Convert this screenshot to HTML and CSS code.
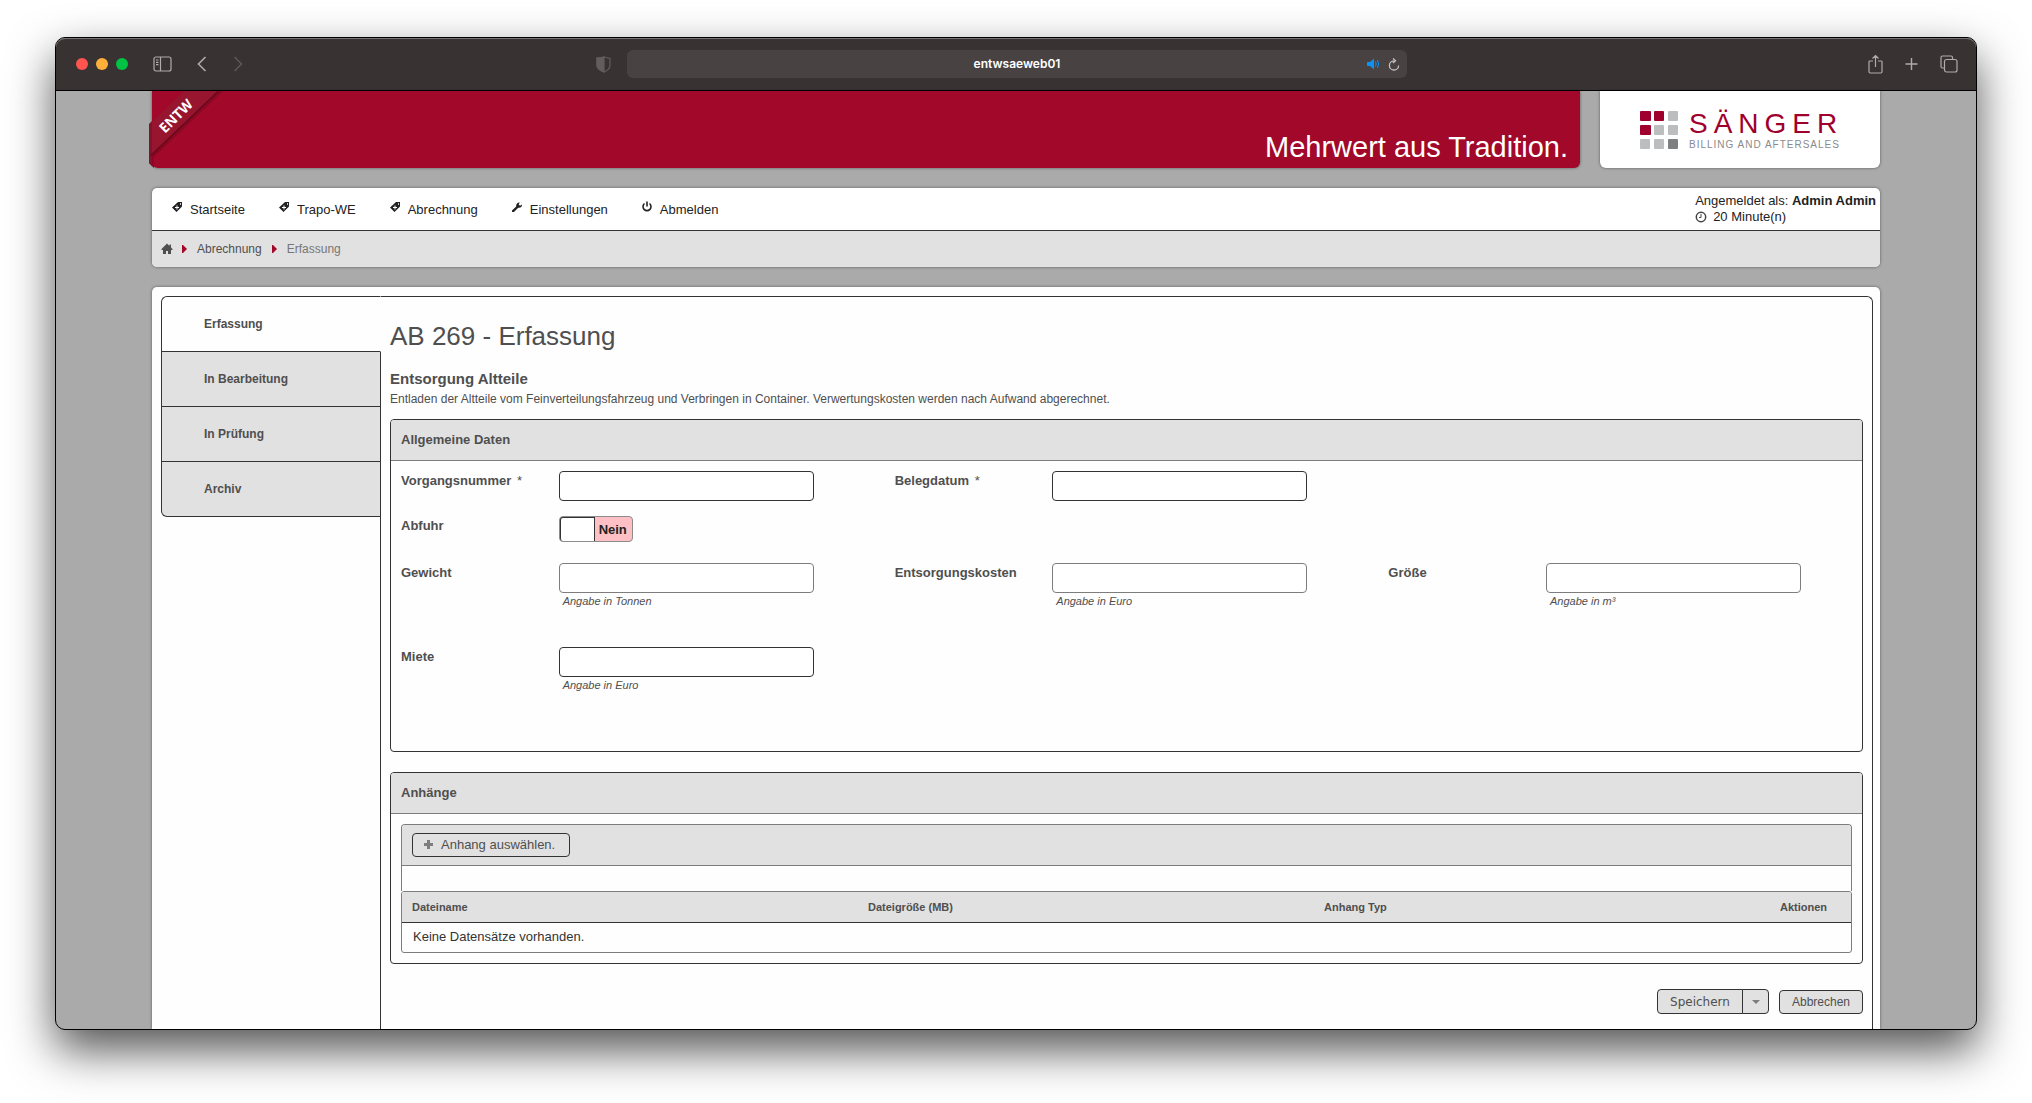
FILE: index.html
```html
<!DOCTYPE html>
<html lang="de">
<head>
<meta charset="utf-8">
<title>AB 269 - Erfassung</title>
<link rel="stylesheet" href="styles.css">
</head>
<body>
<svg class="sprite" aria-hidden="true">
  <symbol id="tag" viewBox="0 0 16 16"><path fill-rule="evenodd" d="M9 3h4v4.500L7.500 13 3 8.500zM11 4.300v1.400h1V4.300zM7.500 6.500v1.500H6v1h1.500v1.500h1V9H10V8H8.500V6.500z"/></symbol>
  <symbol id="wrench" viewBox="0 0 16 16"><path d="M3 11.500 7.200 7.400C6.800 5.300 8.300 3.300 10.700 3.500L9.700 5.500l1.300 1.200 2-1.200c.2 2.400-1.800 3.800-3.800 3.200L5 13H3z"/></symbol>
  <symbol id="power" viewBox="0 0 16 16"><path d="M5.500 4.500a4 4 0 1 0 5 0M8 2.500v5" fill="none" stroke="currentColor" stroke-width="1.600"/></symbol>
  <symbol id="home" viewBox="0 0 16 16"><path d="M8 2.500 10.500 5V3.500H12v3l1.500 1.500v1H12v4H9v-3H7v3H4V9H2.500V8z"/></symbol>
  <symbol id="arrow" viewBox="0 0 5 8"><path d="M0 0h1l4 4-4 4H0z"/></symbol>
</svg>

<div class="window">
  <header class="toolbar">
    <div class="toolbar-left">
      <div class="lights"><span class="light red"></span><span class="light yellow"></span><span class="light green"></span></div>
      <button class="tool" type="button" aria-label="Seitenleiste"><svg width="20" height="16" viewBox="0 0 20 16" fill="none" stroke="currentColor" stroke-width="1.200"><rect x="1" y="1" width="17" height="14" rx="2"/><path d="M7.500 1v14M3 4h2.500M3 6.300h2.500M3 8.600h2.500"/></svg></button>
      <button class="tool back" type="button" aria-label="Zurück"><svg width="10" height="16" viewBox="0 0 10 16" fill="none" stroke="currentColor" stroke-width="1.600"><path d="M8.500 1 1.500 8l7 7"/></svg></button>
      <button class="tool dim" type="button" aria-label="Vorwärts"><svg width="10" height="16" viewBox="0 0 10 16" fill="none" stroke="currentColor" stroke-width="1.600"><path d="m1.500 1 7 7-7 7"/></svg></button>
    </div>
    <div class="toolbar-center">
      <button class="tool shield" type="button" aria-label="Datenschutz"><svg width="16" height="17" viewBox="0 0 16 17" fill="none" stroke="currentColor" stroke-width="1.200"><path d="M8 1C6 1.500 3 2 1 2v7.500c0 3 3.500 5 7 6.500 3.500-1.500 6-3.500 6-6.500V2.500C12 2 10 1.500 8 1z"/><path d="M8 1C6 1.500 3 2 1 2v7.500c0 3 3.500 5 7 6.500z" fill="currentColor"/></svg></button>
      <div class="address">
        <span class="host">entwsaeweb01</span>
        <svg class="sound" width="13" height="12" viewBox="0 0 13 12"><path d="M0 4h3l4-3.500v11L3 8H0z" fill="currentColor"/><path d="M8.500 3.500q1.300 2.500 0 5M10.500 2q2.200 4 0 8" fill="none" stroke="currentColor"/></svg>
        <button class="tool reload" type="button" aria-label="Neu laden"><svg width="12" height="13" viewBox="0 0 12 13" fill="none" stroke="currentColor" stroke-width="1.300"><path d="M6 2.800A4.600 4.600 0 1 0 10.600 7.400M5 .5l2.500 2.300L5 5"/></svg></button>
      </div>
    </div>
    <div class="toolbar-right">
      <button class="tool" type="button" aria-label="Teilen"><svg width="15" height="20" viewBox="0 0 15 20" fill="none" stroke="currentColor" stroke-width="1.200"><path d="M5 7H1.700q-.7 0-.7.700v10.100q0 1.200 1.200 1.200h10.600q1.200 0 1.200-1.200V7.700q0-.7-.7-.7H10M7.500 13V1.500M4.500 4.500l3-3 3 3"/></svg></button>
      <button class="tool" type="button" aria-label="Neuer Tab"><svg width="13" height="14" viewBox="0 0 13 14" fill="none" stroke="currentColor" stroke-width="1.400"><path d="M6.500 1v12M.5 7h12"/></svg></button>
      <button class="tool" type="button" aria-label="Tabübersicht"><svg width="18" height="18" viewBox="0 0 18 18" fill="none" stroke="currentColor" stroke-width="1.200"><path d="M4 13H2.500Q1 13 1 11.500v-9Q1 1 2.500 1H11q1.500 0 1.500 1.500V4"/><rect x="4.500" y="4.500" width="12.500" height="12.500" rx="2"/></svg></button>
    </div>
  </header>

  <div class="page">
    <div class="masthead">
      <div class="banner">
        <svg class="ribbon" width="78" height="77" viewBox="0 0 78 77">
          <path d="M0 36Q0 33 3 31L35 0h35L0 66z" fill="#97152e"/>
          <path d="M70 0 0 66v6l5 5V66L74 0z" fill="#8a0824"/>
          <path d="M0 33v39l3 3V30z" fill="#7e1528"/>
          <path d="M69.500 0 2 64.500" stroke="#660a1c" stroke-width="1.500"/>
          <text class="ribbon-text" transform="translate(16 43) rotate(-45)">ENTW</text>
        </svg>
        <p class="slogan">Mehrwert aus Tradition.</p>
      </div>
      <div class="brand">
        <svg width="38" height="38" viewBox="0 0 38 38" fill="#bbbdbf"><g fill="#a0002d"><rect width="11" height="10" rx="1"/><rect x="14" width="10" height="10" rx="1"/><rect y="14" width="11" height="10" rx="1"/></g><rect x="28" width="10" height="10" rx="1"/><rect x="14" y="14" width="10" height="10" rx="1"/><rect x="28" y="14" width="10" height="10" rx="1"/><rect y="28" width="10" height="10" rx="1"/><rect x="14" y="28" width="10" height="10" rx="1"/><rect x="28" y="28" width="10" height="10" rx="1" fill="#7d7f81"/></svg>
        <div class="brand-text"><span class="brand-name">SÄNGER</span><span class="brand-sub">BILLING AND AFTERSALES</span></div>
      </div>
    </div>

    <div class="navbox">
      <div class="navrow">
        <nav class="menu" aria-label="Hauptmenü">
          <a href="#"><svg class="icon"><use href="#tag"/></svg>Startseite</a>
          <a href="#"><svg class="icon"><use href="#tag"/></svg>Trapo-WE</a>
          <a href="#"><svg class="icon"><use href="#tag"/></svg>Abrechnung</a>
          <a href="#"><svg class="icon"><use href="#wrench"/></svg>Einstellungen</a>
          <a href="#"><svg class="icon"><use href="#power"/></svg>Abmelden</a>
        </nav>
        <div class="user">
          <span>Angemeldet als: <b>Admin Admin</b></span>
          <span class="timer"><svg width="12" height="12" viewBox="0 0 12 12" fill="none" stroke="#444"><circle cx="6" cy="6" r="4.700" stroke-width="1.500"/><path d="M6 3v3.500H4"/></svg>20 Minute(n)</span>
        </div>
      </div>
      <nav class="crumbs" aria-label="Brotkrumen">
        <a class="home" href="#" aria-label="Start"><svg class="icon"><use href="#home"/></svg></a>
        <svg class="arrow"><use href="#arrow"/></svg>
        <a href="#">Abrechnung</a>
        <svg class="arrow"><use href="#arrow"/></svg>
        <span class="current">Erfassung</span>
      </nav>
    </div>

    <div class="card">
      <nav class="tabs" aria-label="Status">
        <a class="tab active" href="#">Erfassung</a>
        <a class="tab" href="#">In Bearbeitung</a>
        <a class="tab" href="#">In Prüfung</a>
        <a class="tab" href="#">Archiv</a>
      </nav>
      <main class="main">
        <h1>AB 269 - Erfassung</h1>
        <h2>Entsorgung Altteile</h2>
        <p class="intro">Entladen der Altteile vom Feinverteilungsfahrzeug und Verbringen in Container. Verwertungskosten werden nach Aufwand abgerechnet.</p>

        <section class="panel">
          <h3>Allgemeine Daten</h3>
          <form class="fields">
            <div class="field"><label for="vorgang">Vorgangsnummer <span class="req">*</span></label><div><input class="text" id="vorgang" type="text"></div></div>
            <div class="field"><label for="beleg">Belegdatum <span class="req">*</span></label><div><input class="text" id="beleg" type="text"></div></div>
            <div class="field field-switch"><label for="abfuhr">Abfuhr</label><div class="switch"><input id="abfuhr" type="checkbox" role="switch"><span>Nein</span></div></div>
            <div class="field field-hinted first"><label for="gewicht">Gewicht</label><div><input class="text light-line" id="gewicht" type="text"><small>Angabe in Tonnen</small></div></div>
            <div class="field field-hinted"><label for="kosten">Entsorgungskosten</label><div><input class="text light-line" id="kosten" type="text"><small>Angabe in Euro</small></div></div>
            <div class="field field-hinted"><label for="groesse">Größe</label><div><input class="text light-line" id="groesse" type="text"><small>Angabe in m³</small></div></div>
            <div class="field field-hinted first"><label for="miete">Miete</label><div><input class="text" id="miete" type="text"><small>Angabe in Euro</small></div></div>
          </form>
        </section>

        <section class="panel">
          <h3>Anhänge</h3>
          <div class="files">
            <div class="upload">
              <div class="upload-bar"><button class="btn pick" type="button"><svg width="9" height="9" viewBox="0 0 9 9" fill="#7d7d7d"><path d="M3 0h3v3h3v3H6v3H3V6H0V3h3z"/></svg>Anhang auswählen.</button></div>
              <div class="upload-list"></div>
            </div>
            <div class="table-frame">
              <table>
                <thead><tr><th>Dateiname</th><th>Dateigröße (MB)</th><th>Anhang Typ</th><th class="actions-col">Aktionen</th></tr></thead>
                <tbody><tr><td colspan="4">Keine Datensätze vorhanden.</td></tr></tbody>
              </table>
            </div>
          </div>
        </section>

        <div class="buttons">
          <div class="split"><button class="btn save" type="button">Speichern</button><button class="btn more" type="button" aria-label="Weitere Optionen"><svg width="8" height="4" viewBox="0 0 8 4" fill="#7d7d7d"><path d="M0 0h8L4 4z"/></svg></button></div>
          <button class="btn cancel" type="button">Abbrechen</button>
        </div>
      </main>
    </div>
  </div>
</div>
</body>
</html>
```

FILE: styles.css
```css
* { box-sizing: border-box; }

body {
  margin: 0;
  min-height: 100vh;
  padding: 37px 55px 73px;
  display: flex;
  background: #fff;
  color: #4f4f4f;
  font: 13px/16px "Liberation Sans", Arial, sans-serif;
}

a { color: inherit; text-decoration: none; }
h1, h2, h3, p { margin: 0; }
button { font: inherit; color: inherit; cursor: pointer; }
svg { display: block; flex: none; }
.sprite { position: absolute; width: 0; height: 0; }
.icon { width: 16px; height: 16px; fill: currentColor; }

/* Browser window */
.window {
  flex: 1;
  min-width: 0;
  display: flex;
  flex-direction: column;
  overflow: hidden;
  border: 1px solid #000;
  border-radius: 10px;
  background: #aaa;
  box-shadow: 0 20px 46px rgba(0, 0, 0, .68);
}

.toolbar {
  display: grid;
  grid-template-columns: 1fr 842px 1fr;
  align-items: center;
  height: 53px;
  padding: 0 18px 0 20px;
  border-bottom: 1px solid #000;
  box-shadow: inset 0 1px #777273;
  border-radius: 9px 9px 0 0;
  background: #393232;
  color: #b0acac;
}
.toolbar-left, .toolbar-center, .toolbar-right, .lights { display: flex; align-items: center; }
.toolbar-right { justify-content: flex-end; gap: 22px; }
.lights { gap: 8px; margin-right: 25px; }
.light { width: 12px; height: 12px; border-radius: 50%; }
.red { background: #ff5450; }
.yellow { background: #ffb03a; }
.green { background: #00c244; }
.tool { padding: 0; border: 0; background: none; }
.back { margin: 0 26px 0 24px; }
.dim { color: #5c5656; }
.shield { margin-right: 15px; color: #635d5d; }
.address {
  flex: 1;
  display: grid;
  grid-template-columns: 1fr auto 1fr;
  align-items: center;
  height: 28px;
  margin-right: 31px;
  padding: 0 7px;
  border-radius: 6px;
  background: #484242;
}
.host { grid-column: 2; color: #fff; font: 600 12px/16px Inter, sans-serif; }
.sound { grid-row: 1; grid-column: 3; justify-self: end; margin-right: 20px; color: #0a93f5; }
.reload { grid-row: 1; grid-column: 3; justify-self: end; color: #c5c2c2; }

/* Site header */
.page { flex: 1; display: flex; flex-direction: column; gap: 20px; padding: 0 96px; }
.masthead { display: grid; grid-template-columns: 1fr 280px; gap: 20px; }
.banner, .brand, .navbox, .card { box-shadow: 0 0 3px rgba(0, 0, 0, .5); }
.banner {
  position: relative;
  display: flex;
  justify-content: flex-end;
  align-items: flex-end;
  height: 77px;
  padding: 0 12px 5px 80px;
  border-radius: 0 0 6px 6px;
  background: #a10829;
}
.ribbon { position: absolute; left: -3px; top: 0; }
.ribbon-text { fill: #fff; font: bold 14px "Open Sans", sans-serif; }
.slogan { color: #fff; font-size: 29px; line-height: 32px; }
.brand {
  display: flex;
  align-items: center;
  gap: 11px;
  padding: 0 40px;
  border-radius: 0 0 6px 6px;
  background: #fff;
}
.brand-text { display: flex; flex-direction: column; gap: 2px; white-space: nowrap; }
.brand-name { color: #a0002d; font-size: 28px; line-height: 28px; letter-spacing: 6px; }
.brand-sub { color: #8a8a8a; font-size: 10px; line-height: 10px; letter-spacing: 1px; }

.navbox { border-radius: 5px; background: #fff; overflow: hidden; }
.navrow {
  display: flex;
  justify-content: space-between;
  height: 43px;
  padding: 5px 4px 0 17px;
  border-bottom: 1px solid #333;
  color: #222;
}
.menu { display: flex; gap: 31px; padding-top: 9px; }
.menu a { display: flex; gap: 5px; line-height: 16px; }
.menu .icon { margin-top: -3px; }
.user { display: flex; flex-direction: column; }
.timer { display: flex; align-items: center; gap: 6px; }
.crumbs {
  display: flex;
  align-items: center;
  height: 36px;
  padding-left: 7px;
  background: #e1e1e1;
  font-size: 12px;
}
.arrow { width: 5px; height: 8px; margin: 0 10px; fill: #a10829; }
.home + .arrow { margin-left: 7px; }
.current { color: #777; }

/* Work area */
.card { flex: 1; display: flex; padding: 9px 7px 0 9px; border-radius: 5px 5px 0 0; background: #fefefe; }
.tabs { position: relative; flex: none; width: 220px; margin-right: -1px; }
.tab {
  display: block;
  height: 55px;
  padding: 19px 42px;
  border: 1px solid #333;
  border-top: 0;
  background: #e1e1e1;
  font-size: 12px;
  font-weight: bold;
}
.tab.active {
  height: 56px;
  border-top: 1px solid #333;
  border-right-color: #fefefe;
  border-radius: 6px 0 0 0;
  background: #fefefe;
}
.tab:last-child { border-radius: 0 0 0 6px; }
.main {
  flex: 1;
  min-width: 0;
  padding: 24px 9px 15px;
  border: 1px solid #333;
  border-bottom: 0;
  border-radius: 0 6px 0 0;
}
h1 { font-size: 26px; line-height: 30px; font-weight: normal; }
h2 { margin-top: 19px; font-size: 15px; line-height: 18px; }
.intro { margin: 3px 0 12px; font-size: 12px; }

.panel { border: 1px solid #333; border-radius: 4px; }
.panel + .panel { margin-top: 20px; }
h3 {
  padding: 12px 10px;
  border-bottom: 1px solid #7d7d7d;
  border-radius: 3px 3px 0 0;
  background: #e1e1e1;
  font-size: 13px;
  line-height: 16px;
}
.fields {
  display: grid;
  grid-template-columns: repeat(3, 1fr);
  column-gap: 30px;
  padding: 10px 10px 20px;
}
.field { display: grid; grid-template-columns: 34% 55%; padding-bottom: 15px; align-items: start; }
.field label { padding-top: 2px; font-weight: bold; }
.field-hinted { padding-bottom: 38px; }
.field-switch { padding-bottom: 21px; }
.field-switch, .first { grid-column: 1; }
.req { margin-left: 2px; font-weight: normal; }
.text {
  display: block;
  width: 100%;
  height: 30px;
  padding: 4px 8px;
  border: 1px solid #333;
  border-radius: 4px;
  background: #fff;
  font: inherit;
}
.light-line { border-color: #7d7d7d; }
small { display: block; padding: 0 4px; font-size: 11px; font-style: italic; }
.switch {
  display: flex;
  justify-self: start;
  width: 74px;
  height: 26px;
  border: 1px solid #8c8c8c;
  border-radius: 4px;
  background: #ffc0c5;
  color: #222;
  font-weight: bold;
}
.switch input {
  appearance: none;
  width: 35px;
  height: 24px;
  margin: 0;
  border: 1px solid #333;
  border-bottom: 0;
  border-radius: 3px 0 0 3px;
  background: #fff;
}
.switch span { padding: 5px 4px 0; }

/* Attachments */
.files { padding: 10px; }
.upload { border: 1px solid #7d7d7d; border-bottom: 0; border-radius: 4px 4px 0 0; }
.upload-bar { padding: 8px 10px; border-bottom: 1px solid #7d7d7d; border-radius: 3px 3px 0 0; background: #e1e1e1; }
.upload-list { height: 25px; }
.btn {
  display: flex;
  align-items: center;
  justify-content: center;
  height: 24px;
  border: 1px solid #333;
  border-radius: 4px;
  background: #e1e1e1;
}
.pick { gap: 8px; padding: 0 14px 1px 11px; }
.table-frame { border: 1px solid #7d7d7d; border-radius: 3px; overflow: hidden; }
table { width: 100%; table-layout: fixed; border-collapse: separate; border-spacing: 0; }
th {
  padding: 7px 10px;
  border-bottom: 1px solid #333;
  background: #e1e1e1;
  font-size: 11px;
  line-height: 16px;
  text-align: left;
}
.actions-col { width: 81px; }
td { padding: 6px 11px 7px; color: #333; }

.buttons { display: flex; justify-content: flex-end; align-items: flex-end; gap: 10px; margin-top: 25px; }
.split { display: flex; }
.save, .more { height: 25px; font: 12px/16px "DejaVu Sans", sans-serif; }
.save { width: 86px; border-radius: 4px 0 0 4px; }
.more { width: 27px; margin-left: -1px; border-radius: 0 4px 4px 0; }
.cancel { width: 84px; font-size: 12px; }
```
